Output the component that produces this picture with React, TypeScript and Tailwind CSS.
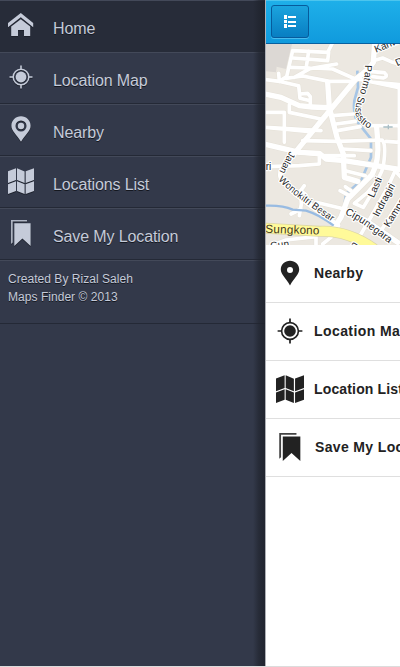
import React from "react";

type IconName = "home" | "target" | "pin" | "pinSolid" | "map" | "bookmark";

function Icon({ name, className }: { name: IconName; className?: string }) {
  return (
    <svg viewBox="0 0 26 26" className={className} fill="currentColor">
      {name === "home" && (
        <>
          <path d="M12.8 .9 L25.2 11 V15.3 L12.8 5.3 L0 15.3 V11 Z" />
          <path d="M12.8 7.3 L22.2 14.6 V24 H16 V18 H10 V24 H3.2 V14.6 Z" />
        </>
      )}
      {name === "target" && (
        <>
          <circle cx="13" cy="13" r="5.4" />
          <circle cx="13" cy="13" r="7.8" fill="none" stroke="currentColor" strokeWidth="1.5" />
          <path d="M12.2 1.5h1.6V5h-1.6z M12.2 21h1.6v3.5h-1.6z M1.5 12.2H5v1.6H1.5z M21 12.2h3.5v1.6H21z" />
        </>
      )}
      {name === "pin" && (
        <>
          <path fillRule="evenodd" d="M13 .3C7.7.3 3.4 4.5 3.4 9.7c0 5.2 5.3 8.8 9.6 16 4.3-7.2 9.6-10.8 9.6-16C22.6 4.5 18.3.3 13 .3zM13 4.5a5.5 5.5 0 1 1 0 11 5.5 5.5 0 0 1 0-11z" />
          <circle cx="13" cy="10" r="3.2" />
        </>
      )}
      {name === "pinSolid" && (
        <path fillRule="evenodd" d="M13 .8C7.9.8 3.8 4.7 3.8 9.5c0 5 5.2 8.4 9.2 15.9 4-7.5 9.2-10.9 9.2-15.9C22.2 4.7 18.1.8 13 .8zM13 7a3 3 0 1 1 0 6 3 3 0 0 1 0-6z" />
      )}
      {name === "map" && (
        <path d="M0 3.3 8 .3V12L0 15z M9 .3 16.6 3.5V15.1L9 12z M17.7 3.3 26 .3V12L17.7 15z M0 16.2 8 13.2V23L0 26z M9 13.2 16.6 16.3V26L9 23z M17.7 16.2 26 13.2V23L17.7 26z" />
      )}
      {name === "bookmark" && (
        <>
          <path d="M3 0H19V1.6H4.7V22.5L3 24z" opacity=".85" />
          <path d="M6.3 3.2H22.6V26L14.4 18.5 6.3 26z" />
        </>
      )}
    </svg>
  );
}

const menu: { label: string; icon: IconName }[] = [
  { label: "Home", icon: "home" },
  { label: "Location Map", icon: "target" },
  { label: "Nearby", icon: "pin" },
  { label: "Locations List", icon: "map" },
  { label: "Save My Location", icon: "bookmark" },
];

const items: { label: string; icon: IconName; text: string }[] = [
  { label: "Nearby", icon: "pinSolid", text: "ml-[10px] tracking-[0.3px]" },
  { label: "Location Map", icon: "target", text: "ml-[10px] tracking-[0.42px]" },
  { label: "Location List", icon: "map", text: "ml-[10px] tracking-[0.15px]" },
  { label: "Save My Location", icon: "bookmark", text: "ml-[11px] tracking-[0.35px]" },
];

const wideRoads = [
  "M326 -5 L322 55 Q310 75 270 105 L195 195 L100 310 L72 345 Q36 380 46 402 Q60 425 95 455 L215 545",
  "M-5 150 L45 160 L100 185 Q150 192 195 190",
  "M185 115 L190 190 L213 280 L232 330 L235 400 L275 412",
  "M332 250 L335 290 Q340 350 318 392 L245 465 L225 520 L205 550",
  "M-5 300 L100 325 L160 328 L180 345 L235 350 L405 377",
  "M240 500 L300 530 L395 595",
];

const narrowRoads = [
  "M-5 106 L45 113 L98 125 L102 163 L133 170 V188 M102 150 L125 148 L133 158 V180",
  "M38 88 L40 112 L62 98 L80 20 L185 25 L198 0",
  "M80 42 L185 50 L188 25 M75 70 L130 72 M128 22 L120 75",
  "M85 100 L132 74 L212 60 M140 72 L200 75 L268 105 M60 103 L110 96 L190 112 L265 112",
  "M200 215 L262 210 M210 240 L268 232 M214 260 L282 248",
  "M-5 205 H55 V295 M70 182 V205 L165 225 M-5 250 L125 262 M-5 250 L165 260",
  "M110 290 L215 292 L348 288 Q362 300 352 365 Q346 400 305 445 L265 478 L292 490 L325 435",
  "M95 325 L160 332 V360 L100 365 L-5 368 M160 335 L265 335",
  "M230 315 L315 320 M238 380 L298 395 M222 440 L250 455 M238 428 L255 440",
  "M322 50 L350 42 L380 55 L405 62 M308 82 L355 86 Q368 98 352 102 L320 98 M275 105 L405 132 M325 115 L405 122",
  "M400 125 V378 M305 245 L405 245 M360 292 L402 295 M385 378 L405 400",
  "M150 475 L235 495 M115 425 L104 440 L106 480 L100 515 M104 440 L120 452 M75 510 L105 495",
  "M262 610 L320 510 L365 430 L390 375 M345 560 L405 465",
  "M20 603 L60 588 L150 578 M150 570 V603 M170 600 L195 580",
];

function MapView() {
  return (
    <svg viewBox="0 0 402 603" className="block h-[201px] w-[134px] shrink-0">
      <rect width="402" height="603" fill="#ece8e1" />
      <path d="M0 0H78L60 75 32 68 30 85 0 82z" fill="#dcd8d4" />
      <path d="M274 80 L276 130 L265 170 Q260 205 275 235 L315 285 L315 340 L285 410 L240 450 L230 515" fill="none" stroke="#a6c5e5" strokeWidth="8" />
      <g fill="none" stroke="#e5e1d8" strokeLinecap="round" strokeLinejoin="round">
        {narrowRoads.map((d) => <path key={d} d={d} strokeWidth="14" />)}
        {wideRoads.map((d) => <path key={d} d={d} strokeWidth="19" />)}
      </g>
      <g fill="none" stroke="#fff" strokeLinecap="round" strokeLinejoin="round">
        {narrowRoads.map((d) => <path key={d} d={d} strokeWidth="11" />)}
        {wideRoads.map((d) => <path key={d} d={d} strokeWidth="16" />)}
      </g>
      <path d="M-2 485 Q50 483 80 497 L120 500 Q160 512 203 545" fill="none" stroke="#98bbe2" strokeWidth="7" />
      <path d="M-10 552 L160 562 Q245 558 325 615" fill="none" stroke="#ddd7a7" strokeWidth="33" />
      <path d="M-10 552 L160 562 Q245 558 325 615" fill="none" stroke="#fffa99" strokeWidth="28" />
      <path d="M352 249H380 M367 242V256" stroke="#a9bec5" strokeWidth="4" />
      <defs>
        <path id="patmo" d="M297 63 C298 112 282 140 271 178 C264 212 268 238 325 260" />
        <path id="jalan" d="M71 321 L37 388" />
        <path id="wono" d="M36 408 Q70 442 116 475 Q155 505 215 545" />
        <path id="cipu" d="M236 510 Q275 528 309 554 L375 602" />
      </defs>
      <g fill="#292929" stroke="#fff" strokeWidth="7" strokeLinejoin="round" className="font-['Liberation_Sans',sans-serif]" style={{ paintOrder: "stroke" }} fontSize="30">
        <text transform="translate(330 26) rotate(-22)">Kanwa</text>
        <text transform="translate(394 67) rotate(-25)">D</text>
        <text><textPath href="#patmo">Patmo Susastro</textPath></text>
        <text fontSize="29"><textPath href="#jalan">Jalan</textPath></text>
        <text fontSize="29"><textPath href="#wono">Wonokitri Besar</textPath></text>
        <text fontSize="31"><textPath href="#cipu">Cipunegara</textPath></text>
        <text x="-1" y="378">ri</text>
        <text transform="translate(323 463) rotate(-66)">Lasti</text>
        <text transform="translate(337 520) rotate(-62)">Indragiri</text>
        <text transform="translate(369 551) rotate(-58)">Kampar</text>
        <text transform="translate(14 616) rotate(-8)">Gun</text>
        <text transform="translate(267 615) rotate(-55)">n</text>
      </g>
      <text x="-2" y="566" fontSize="35" fill="#44381f" className="font-['Liberation_Sans',sans-serif]" textLength="162" transform="rotate(2 0 566)">Sungkono</text>
    </svg>
  );
}

export default function App() {
  return (
    <div className="flex h-[667px] w-[400px] flex-col overflow-hidden bg-white font-['Liberation_Sans',Arial,sans-serif]">
      <div className="flex h-[666px] shrink-0">
        <aside className="relative w-[265px] shrink-0 bg-[#33394a] text-[#c5cbd9]">
          <nav>
            {menu.map((m, i) => (
              <a
                key={m.label}
                className={`flex h-[52px] items-start border-t border-t-[#434959] pl-2 ${i === 0 ? "bg-[#272c39]" : "border-b border-b-[#242936]"}`}
              >
                <Icon name={m.icon} className="mt-[11px] size-[26px] shrink-0 drop-shadow-[0_1px_0_#1d212c]" />
                <span className="ml-[19px] mt-4 text-base leading-6 tracking-[-0.12px] [text-shadow:0_1px_0_#14171f]">{m.label}</span>
              </a>
            ))}
          </nav>
          <div className="h-16 border-b border-t border-b-[#242936] border-t-[#434959] pl-2 pt-[9px] text-xs leading-[18px] tracking-[0.04px] [text-shadow:0_1px_0_#14171f]">
            <p>Created By Rizal Saleh</p>
            <p>Maps Finder © 2013</p>
          </div>
          <div className="absolute inset-y-0 right-0 w-3 bg-linear-to-r from-transparent via-[#20242eaa] to-[#1d2029cc]" />
        </aside>
        <main className="flex w-[135px] shrink-0 flex-col overflow-hidden border-l border-[#aeb0b6] bg-white">
          <header className="h-11 w-[134px] shrink-0 border-b border-t border-b-[#08609f] border-t-[#4cc5ee] bg-linear-to-b from-[#1eafe9] to-[#109add] pl-[5px] pt-1">
            <button className="flex h-[33px] w-[38px] items-center justify-center rounded-[3px] border border-[#075b9c] bg-linear-to-b from-[#1ba4de] to-[#087ec2] shadow-[0_1px_0_#4abbed]">
              <svg viewBox="0 0 12 13" className="h-[13px] w-3" fill="#fff" shapeRendering="crispEdges">
                <path d="M0 0h3v4H0z M0 5h3v3H0z M0 9h3v4H0z M4 1h8v2H4z M4 6h8v2H4z M4 10h8v2H4z" />
              </svg>
            </button>
          </header>
          <MapView />
          <ul className="w-[134px]">
            {items.map((m) => (
              <li key={m.label} className="flex h-[58px] items-center border-b border-[#dfdfdf] pb-0.5 pl-[10px] text-[#222]">
                <Icon name={m.icon} className={`shrink-0 ${m.icon === "pinSolid" ? "mx-px size-[26px]" : "size-7"}`} />
                <span className={`whitespace-nowrap text-sm font-bold ${m.text}`}>{m.label}</span>
              </li>
            ))}
          </ul>
        </main>
      </div>
      <div className="h-px shrink-0 bg-[#dcdcdc]" />
    </div>
  );
}
